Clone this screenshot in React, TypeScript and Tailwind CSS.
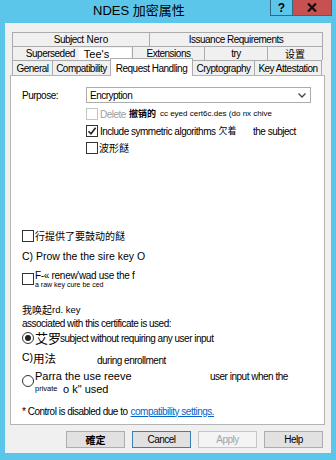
import React from 'react';

const N = "font-['Liberation_Sans','Noto_Sans_CJK_SC',sans-serif]";
const W = "font-['Liberation_Sans','Noto_Sans_CJK_SC',sans-serif] tracking-normal";
const CJK = "font-['Noto_Sans_CJK_SC',sans-serif] tracking-normal";

const CheckBox: React.FC<{ checked?: boolean; disabled?: boolean }> = ({ checked, disabled }) => (
  <div
    className={`w-[12px] h-[12px] shrink-0 border bg-white flex items-center justify-center ${
      disabled ? 'border-[#c4c4c4]' : 'border-[#333333]'
    }`}
  >
    {checked && (
      <svg width="10" height="10" viewBox="0 0 10 10">
        <path d="M1.5 5.2 L4 7.8 L8.6 1.8" fill="none" stroke="#222" strokeWidth="1.6" />
      </svg>
    )}
  </div>
);

const Radio: React.FC<{ checked?: boolean }> = ({ checked }) => (
  <div className="w-[12px] h-[12px] shrink-0 rounded-full border border-[#333333] bg-white flex items-center justify-center">
    {checked && <div className="w-[6px] h-[6px] rounded-full bg-[#222]" />}
  </div>
);

const Tab: React.FC<{ w: string; last?: boolean; children: React.ReactNode }> = ({ w, last, children }) => (
  <div
    className={`${w} h-full flex items-center justify-center border-t border-l border-[#acacac] bg-[#f0f0f0] ${
      last ? 'border-r' : ''
    }`}
  >
    {children}
  </div>
);

const Button: React.FC<{ kind?: 'default' | 'focus' | 'disabled'; children: React.ReactNode }> = ({ kind = 'default', children }) => {
  const cls =
    kind === 'focus'
      ? 'border-[#3c7fb1] bg-[#e1e1e1]'
      : kind === 'disabled'
      ? 'border-[#c6c6c6] bg-[#f4f4f4] text-[#a3a3a3]'
      : 'border-[#adadad] bg-[#e1e1e1]';
  return (
    <div className={`w-[59px] h-[17px] border flex items-center justify-center ${cls}`}>{children}</div>
  );
};

export default function App() {
  return (
    <div className={`w-[336px] h-[460px] bg-[#5cc6ea] flex flex-col text-[10px] tracking-[-0.5px] whitespace-nowrap text-black ${N}`}>
      {/* title bar */}
      <div className="h-[23px] shrink-0 flex items-start">
        <div className={`pl-[93px] pt-[3px] text-[13px] leading-[16px] ${W}`}>NDES 加密属性</div>
        <div className="ml-auto mr-[4px] h-[16px] flex border-x border-b border-[#2f6a86]">
          <div className={`w-[22px] flex items-center justify-center border-r border-[#2f6a86] font-bold text-[12px] ${W}`}>?</div>
          <div className="w-[38px] bg-[#c75050] flex items-center justify-center">
            <svg width="10" height="9" viewBox="0 0 10 9">
              <path d="M1 0.5 L9 8.5 M9 0.5 L1 8.5" stroke="#111" strokeWidth="2.2" />
            </svg>
          </div>
        </div>
      </div>

      {/* client area */}
      <div className="mx-[5px] h-[430px] shrink-0 bg-[#f0f0f0] flex flex-col pt-[9px] pl-[5px]">
        {/* tabs */}
        <div className="ml-[2px] w-[311px] flex flex-col">
          <div className="h-[14px] flex">
            <Tab w="w-[137px]">
              <span>Subject</span>
              <span className={`ml-[3px] text-[10px] ${W}`}>Nero</span>
            </Tab>
            <Tab w="flex-1" last>
              Issuance Requirements
            </Tab>
          </div>
          <div className="h-[14px] flex">
            <Tab w="w-[120px]">
              <span className="ml-[12px]">Superseded</span>
              <span className={`ml-[4px] bg-white h-[13px] mt-px pl-[5px] pr-[22px] text-[11px] leading-[13px] ${W}`}>Tee's</span>
            </Tab>
            <Tab w="w-[72px]">Extensions</Tab>
            <Tab w="w-[63px]">try</Tab>
            <Tab w="flex-1" last>
              <span className={`text-[10px] ${CJK}`}>设置</span>
            </Tab>
          </div>
          <div className="h-[15px] flex">
            <Tab w="w-[40px]">General</Tab>
            <Tab w="w-[58px]">Compatibility</Tab>
            <div className="relative z-10 -mt-[2px] w-[83px] h-[18px] bg-white border-x border-t border-[#acacac] flex items-start justify-center pt-[2px]">
              Request Handling
            </div>
            <div className="w-[61px] h-full flex items-center justify-center border-t border-[#acacac] bg-[#f0f0f0]">Cryptography</div>
            <Tab w="w-[68px]" last>
              Key Attestation
            </Tab>
          </div>
        </div>

        {/* panel */}
        <div className="w-[315px] h-[350px] shrink-0 bg-white border border-[#b4b4b4] flex flex-col pl-[11px]">
          <div className="mt-[11px] h-[16px] flex items-center">
            <div className="w-[64px]">Purpose:</div>
            <div className="w-[225px] h-[16px] border border-[#acacac] flex items-center justify-between pl-[3px] pr-[4px]">
              <span>Encryption</span>
              <svg width="8" height="5" viewBox="0 0 8 5">
                <path d="M0.5 0.5 L4 4 L7.5 0.5" fill="none" stroke="#444" strokeWidth="1.3" />
              </svg>
            </div>
          </div>

          <div className="ml-[64px] flex flex-col">
            <div className="mt-[5px] h-[12px] flex items-center">
              <CheckBox disabled />
              <span className="ml-[2px] text-[#a0a0a0]">Delete</span>
              <span className={`ml-[3px] text-[9px] leading-[12px] font-bold ${CJK}`}>撤销的</span>
              <span className={`ml-[4px] text-[8px] ${W}`}>cc eyed cert6c.des (do nx chive</span>
            </div>
            <div className="mt-[5px] h-[12px] flex items-center">
              <CheckBox checked />
              <div className="ml-[2px] w-[153px] flex items-center">
                <span>Include symmetric algorithms</span>
                <span className={`ml-[3px] text-[9px] leading-[12px] ${CJK}`}>欠着</span>
              </div>
              <span>the subject</span>
            </div>
            <div className="mt-[5px] h-[12px] flex items-center">
              <CheckBox />
              <span className={`ml-[1px] text-[10px] leading-[12px] ${CJK}`}>波形餸</span>
            </div>
          </div>

          <div className="mt-[76px] h-[12px] flex items-center">
            <CheckBox />
            <span className={`ml-[1px] text-[10px] leading-[12px] ${CJK}`}>行提供了要鼓动的餸</span>
          </div>

          <div className={`mt-[8px] h-[14px] flex items-center text-[10.5px] ${W}`}>C) Prow the the sire key O</div>

          <div className="mt-[6px] h-[20px] flex items-start">
            <div className="mt-[3px]">
              <CheckBox />
            </div>
            <div className={`ml-[1px] flex flex-col ${W}`}>
              <span className="text-[10px] leading-[11px] tracking-[-0.3px]">F-« renew'wad use the f</span>
              <span className="text-[7px] leading-[8px]">a raw key cure be ced</span>
            </div>
          </div>

          <div className="mt-[13px] h-[14px] flex items-center">
            <span className={`text-[10px] leading-[14px] ${CJK}`}>我唤起</span>
            <span className={`text-[9.5px] ${W}`}>rd. key</span>
          </div>
          <div className="mt-[1px] h-[11px] flex items-center">associated with this certificate is used:</div>

          <div className="mt-[2px] h-[14px] flex items-center">
            <Radio checked />
            <span className={`ml-[1px] w-[25px] text-[13px] leading-[14px] ${CJK}`}>艾罗</span>
            <span>subject without requiring any user input</span>
          </div>

          <div className="mt-[6px] h-[14px] flex items-center">
            <div className="w-[75px] flex items-center">
              <span className={`text-[10.5px] ${W}`}>C)</span>
              <span className={`text-[11.5px] leading-[14px] ${CJK}`}>用法</span>
            </div>
            <span className="mt-[5px]">during enrollment</span>
          </div>

          <div className="mt-[5px] h-[26px] flex items-start">
            <div className="mt-[5px]">
              <Radio />
            </div>
            <div className="ml-[1px] flex flex-col">
              <div className="h-[13px] flex items-center">
                <span className={`w-[175px] text-[11px] ${W}`}>Parra the use reeve</span>
                <span>user input when the</span>
              </div>
              <div className="h-[12px] flex items-center">
                <span className={`w-[28px] text-[7.5px] ${W}`}>private</span>
                <span className={`text-[11px] ${W}`}>o k" used</span>
              </div>
            </div>
          </div>

          <div className="mt-[9px] h-[12px] flex items-center">
            <span>* Control is disabled due to</span>
            <span className="ml-[3px] text-[#0066cc] underline">compatibility settings.</span>
          </div>
        </div>

        {/* buttons */}
        <div className="mt-[6px] pl-[56px] flex gap-[7px]">
          <Button>
            <span className={`font-bold text-[10px] ${CJK}`}>確定</span>
          </Button>
          <Button kind="focus">Cancel</Button>
          <Button kind="disabled">Apply</Button>
          <Button>Help</Button>
        </div>
      </div>
    </div>
  );
}
